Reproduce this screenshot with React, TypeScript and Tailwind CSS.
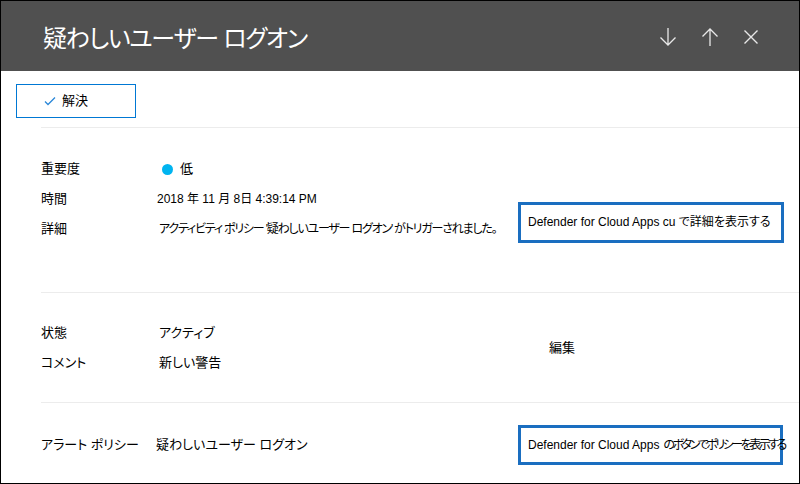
import { useState } from 'react';

const font = "font-['Liberation_Sans','Noto_Sans_CJK_JP',sans-serif] [font-feature-settings:'palt']";

function Row({ label, children }: { label: string; children: React.ReactNode }) {
  return (
    <div className="flex items-center h-[30px]">
      <div className="w-[118px] shrink-0">{label}</div>
      <div className="flex items-center">{children}</div>
    </div>
  );
}

export default function App() {
  const [resolved, setResolved] = useState(false);

  return (
    <div className={`w-[800px] h-[484px] border border-black bg-white text-[13px] text-black overflow-hidden flex flex-col ${font}`}>
      {/* Header */}
      <div className="h-[70px] shrink-0 bg-[#505050] flex items-center pl-[42px] pr-[40px]">
        <h1 className="text-[24px] tracking-[-1.2px] text-white flex-1 pt-[6px]">疑わしいユーザー ログオン</h1>
        <div className="flex items-center gap-[24px] text-[#e8e8e8] pt-[2px]">
          <svg width="18" height="20" viewBox="0 0 18 20" fill="none" stroke="currentColor" strokeWidth="1.3">
            <path d="M9 1v17M1.5 10.5 9 18l7.5-7.5" />
          </svg>
          <svg width="18" height="20" viewBox="0 0 18 20" fill="none" stroke="currentColor" strokeWidth="1.3">
            <path d="M9 19V2M1.5 9.5 9 2l7.5 7.5" />
          </svg>
          <svg width="16" height="16" viewBox="0 0 16 16" fill="none" stroke="currentColor" strokeWidth="1.4">
            <path d="M1.5 1.5l13 13M14.5 1.5l-13 13" />
          </svg>
        </div>
      </div>

      {/* Toolbar */}
      <div className="pl-[15px] pt-[13px] pb-[9px]">
        <button
          onClick={() => setResolved(!resolved)}
          className="w-[120px] h-[34px] border border-[#0078d4] flex items-center pl-[27px] gap-[6px]"
        >
          <svg width="12" height="10" viewBox="0 0 12 10" fill="none" stroke="#2b88d8" strokeWidth="1.3">
            <path d="M1 5.5 4 8.5 11 1.5" />
          </svg>
          <span>解決</span>
        </button>
      </div>

      {/* Summary */}
      <div className="ml-[40px] border-t border-[#ececec] pt-[26px] h-[166px]">
        <Row label="重要度">
          <span className="w-[11px] h-[11px] rounded-full bg-[#00b4f0] ml-[3px] mr-[7px]" />
          <span>低</span>
        </Row>
        <Row label="時間">
          <span className="text-[12px] -ml-[2px]">2018 年 11 月 8日 4:39:14 PM</span>
        </Row>
        <div className="flex items-center h-[30px]">
          <div className="w-[118px] shrink-0">詳細</div>
          <div className="w-[359px] shrink-0 whitespace-nowrap text-[12px] tracking-[-1.2px]">
            アクティビティ ポリシー '疑わしいユーザー ログオン' がトリガーされました。
          </div>
          <div className="w-[266px] h-[41px] mb-[14px] border-[3px] border-[#1a6ec0] flex items-center pl-[7px] whitespace-nowrap text-[12px]">
            Defender for Cloud Apps cu で詳細を表示する
          </div>
        </div>
      </div>

      {/* Status */}
      <div className="ml-[40px] border-t border-[#ececec] pt-[25px] h-[111px] flex">
        <div className="w-[400px]">
          <Row label="状態">
            <span>アクティブ</span>
          </Row>
          <Row label="コメント">
            <span>新しい警告</span>
          </Row>
        </div>
        <div className="pt-[20px] pl-[108px]">
          <button className="hover:underline">編集</button>
        </div>
      </div>

      {/* Policy */}
      <div className="ml-[40px] border-t border-[#ececec] pt-[19px] flex items-center h-[81px] pb-[16px]">
        <div className="w-[115px] shrink-0">アラート ポリシー</div>
        <div className="w-[362px] shrink-0">疑わしいユーザー ログオン</div>
        <div className="w-[265px] h-[40px] border-[3px] border-[#1a6ec0] flex items-center pl-[7px] whitespace-nowrap text-[12px]">
          Defender for Cloud Apps <span className="ml-[4px] tracking-[-2.5px]">のボタンでポリシーを表示する</span>
        </div>
      </div>
    </div>
  );
}
